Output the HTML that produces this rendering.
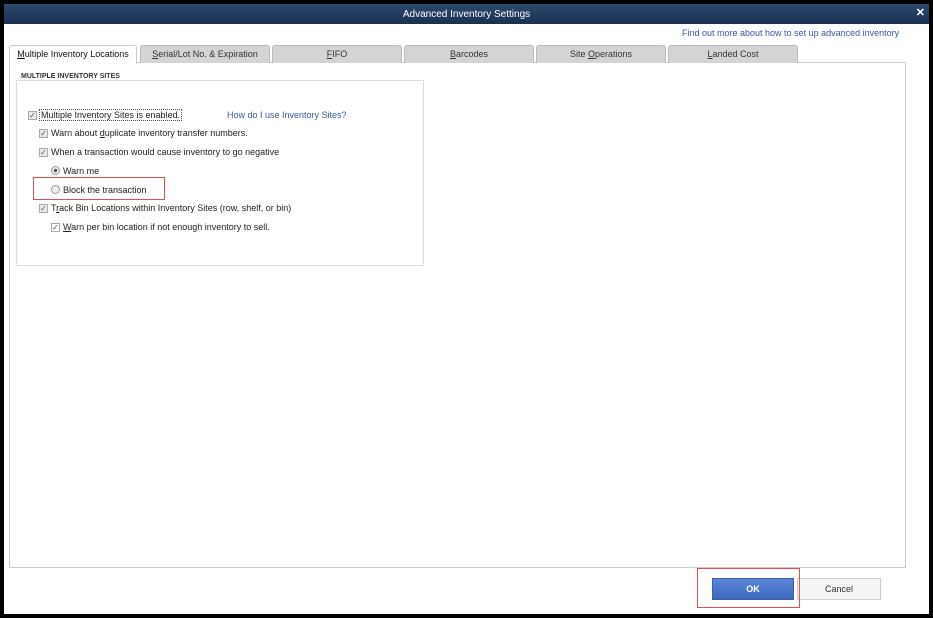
<!DOCTYPE html><html><head><style>
*{margin:0;padding:0;box-sizing:border-box}
body{width:933px;height:618px;background:#000;position:relative;overflow:hidden;font-family:"Liberation Sans",Arial,sans-serif;font-size:9px;color:#222}
.a{position:absolute}
.title{left:4px;top:4px;width:925px;height:20px;background:linear-gradient(#2b4a6e,#1a3050);color:#fff;text-align:center;line-height:21px;font-size:10px}
.body{left:4px;top:24px;width:925px;height:590px;background:#fff}
.tab{top:45px;height:18px;background:#d4d4d4;border:1px solid #bbb;border-bottom:none;border-radius:3px 3px 0 0;text-align:center;line-height:17px;font-size:9px;color:#333}
.panel{left:9px;top:62px;width:897px;height:506px;border:1px solid #ccc;background:#fff}
.cb{width:9px;height:9px;border:1px solid #aaa;background:#e8e8e8;font-size:8px;line-height:7px;text-align:center;color:#555}
.rd{width:9px;height:9px;border:1px solid #999;border-radius:50%;background:#eee}
.t{font-size:9px;color:#222}
</style></head><body>
<div class="a title">Advanced Inventory Settings</div>
<div class="a" style="right:8px;top:6px;color:#fff;font-size:11px;font-weight:bold">✕</div>
<div class="a body"></div>
<div class="a" style="left:682px;top:28px;color:#3a5a9c;font-size:9px">Find out more about how to set up advanced inventory</div>
<div class="a panel"></div>
<div class="a tab" style="left:9px;width:128px;background:#fff;border-color:#ccc;height:19px;z-index:2;color:#111"><u>M</u>ultiple Inventory Locations</div>
<div class="a tab" style="left:140px;width:130px"><u>S</u>erial/Lot No. &amp; Expiration</div>
<div class="a tab" style="left:272px;width:130px"><u>F</u>IFO</div>
<div class="a tab" style="left:404px;width:130px"><u>B</u>arcodes</div>
<div class="a tab" style="left:536px;width:130px">Site <u>O</u>perations</div>
<div class="a tab" style="left:668px;width:130px"><u>L</u>anded Cost</div>
<div class="a" style="left:16px;top:80px;width:408px;height:186px;border:1px solid #ddd"></div>
<div class="a" style="left:18px;top:73px;background:#fff;padding:0 3px;font-size:7px;font-weight:bold;color:#333">MULTIPLE INVENTORY SITES</div>
<div class="a cb" style="left:28px;top:111px">✓</div>
<div class="a t" style="left:39px;top:109px;border:1px dotted #555;padding:0 1px">Multiple Inventory Sites is enabled.</div>
<div class="a" style="left:227px;top:110px;color:#3a5a9c">How do I use Inventory Sites?</div>
<div class="a cb" style="left:39px;top:129px">✓</div><div class="a t" style="left:51px;top:128px">Warn about <u>d</u>uplicate inventory transfer numbers.</div>
<div class="a cb" style="left:39px;top:148px">✓</div><div class="a t" style="left:51px;top:147px">When a transaction would cause inventory to go negative</div>
<div class="a rd" style="left:51px;top:166px;background:radial-gradient(#555 30%,#eee 40%)"></div><div class="a t" style="left:63px;top:166px">Warn me</div>
<div class="a rd" style="left:51px;top:185px"></div><div class="a t" style="left:63px;top:185px">Block the transaction</div>
<div class="a" style="left:33px;top:177px;width:132px;height:23px;border:1px solid #e05050"></div>
<div class="a cb" style="left:39px;top:204px">✓</div><div class="a t" style="left:51px;top:203px">T<u>r</u>ack Bin Locations within Inventory Sites (row, shelf, or bin)</div>
<div class="a cb" style="left:51px;top:223px;background:#fff">✓</div><div class="a t" style="left:63px;top:222px"><u>W</u>arn per bin location if not enough inventory to sell.</div>
<div class="a" style="left:712px;top:578px;width:82px;height:22px;background:linear-gradient(#5b86d6,#3e68bf);border:1px solid #3a5ea8;color:#fff;text-align:center;line-height:20px;font-weight:bold">OK</div>
<div class="a" style="left:797px;top:578px;width:84px;height:22px;background:#f5f5f5;border:1px solid #ccc;text-align:center;line-height:20px;color:#333">Cancel</div>
<div class="a" style="left:697px;top:568px;width:103px;height:40px;border:1px solid #e05050"></div>
</body></html>
